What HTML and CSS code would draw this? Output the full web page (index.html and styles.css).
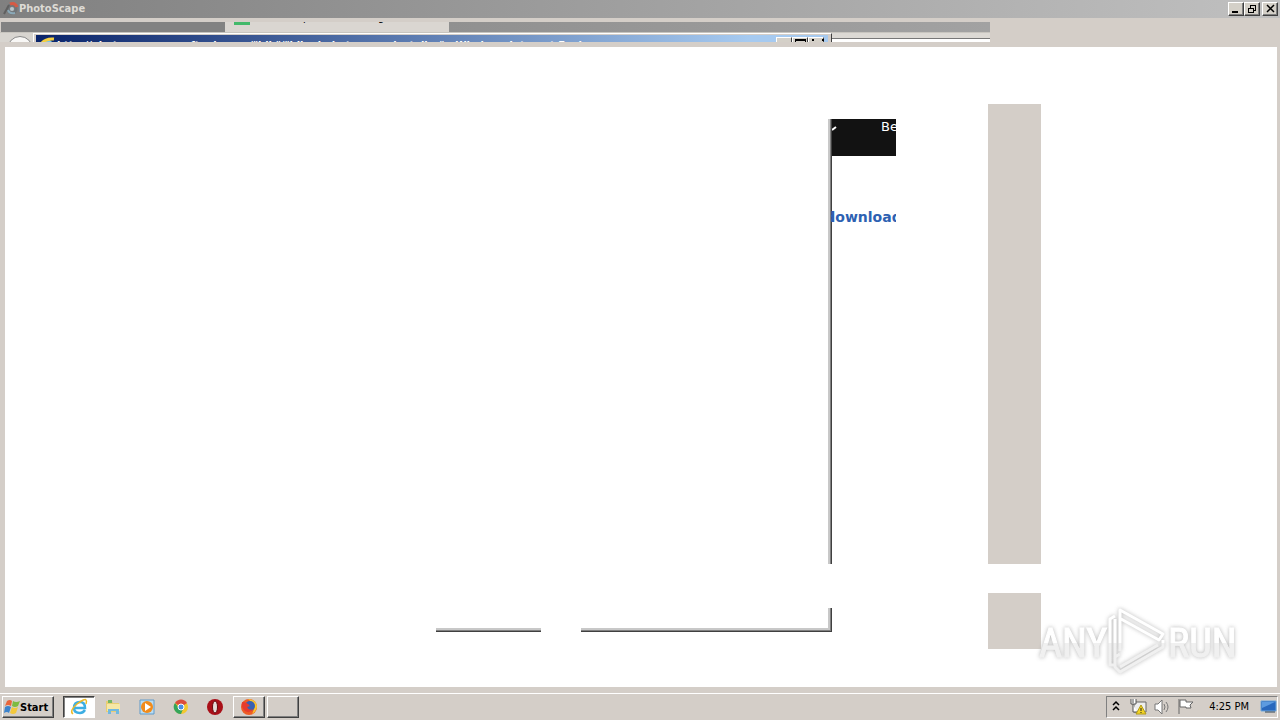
FILE: index.html
```html
<!DOCTYPE html>
<html lang="en">
<head>
<meta charset="utf-8">
<title>PhotoScape</title>
<link rel="stylesheet" href="styles.css">
</head>
<body>
<div class="desktop">
  <header class="titlebar">
    <svg class="app-icon" viewBox="0 0 16 16"><circle cx="9" cy="8" r="4" fill="none" stroke="#707579" stroke-width="3"/><path d="M7 3Q12 1 14 6" stroke="#d65a45" stroke-width="3" fill="none"/><path d="M5 9Q6 13 12 12" stroke="#8ba9b8" stroke-width="2" fill="none"/><path d="M1 13L6 4" stroke="#606060" stroke-width="2"/><circle cx="9" cy="8" r="2" fill="#b9c4c9"/></svg>
    <h1 class="title">PhotoScape</h1>
    <div class="window-buttons">
      <button class="caption" aria-label="Minimize"><svg class="caption-icon" viewBox="0 0 12 10"><path d="M2 8h6" stroke="#000" stroke-width="2"/></svg></button>
      <button class="caption" aria-label="Restore"><svg class="caption-icon" viewBox="0 0 12 10" shape-rendering="crispEdges"><path d="M4.500 3.500v-2h5v5h-2M4 1h6M2.500 4.500h5v4h-5zM2 4h6" fill="none" stroke="#000"/></svg></button>
      <button class="caption close" aria-label="Close"><svg class="caption-icon" viewBox="0 0 12 10"><path d="M3 1l7 7M10 1L3 8" stroke="#000" stroke-width="1.500"/></svg></button>
    </div>
  </header>
  <main class="workspace">
    <div class="tabs">
      <div class="tab"></div>
      <div class="tab active"><span class="tab-mark"></span><span class="tab-text">Photoscape Photo Editing</span></div>
      <div class="tab rest"></div>
    </div>
    <div class="browser-row">
      <div class="nav"><span class="back"></span></div>
      <div class="ie-frame">
        <div class="ie-title">
          <svg class="ie-small" viewBox="0 0 16 16"><circle cx="8" cy="9" r="5" fill="none" stroke="#77c4ed" stroke-width="3"/><path d="M1 9Q5 1 15 2" fill="none" stroke="#f4cf42" stroke-width="3"/></svg>
          <span class="ie-text">http://photoscape.en.softonic.com/"bib"/"bibod.photoscape.installer" - Windows Internet Explorer</span>
          <span class="minis"><span class="mini"></span><span class="mini mini-max"></span><span class="mini mini-close"></span></span>
        </div>
      </div>
      <div class="address"></div>
    </div>
    <section class="canvas">
      <div class="frame-edge"></div>
      <div class="page-header"><svg class="tick" viewBox="0 0 5 6"><path d="M0 5L4 2" stroke="#fff" stroke-width="2"/></svg><span class="page-word">Be</span></div>
      <a class="download" href="#">download</a>
      <div class="ghost"></div>
      <div class="ghost ghost-small"></div>
      <div class="frame-corner"></div>
      <div class="frame-base"></div>
      <svg class="watermark" viewBox="0 0 210 76" role="img" aria-label="ANY RUN">
        <defs><linearGradient id="fade" x1="0" y1="0" x2="0" y2="76" gradientUnits="userSpaceOnUse"><stop offset=".52" stop-color="#fff"/><stop offset=".53" stop-color="#eee"/></linearGradient></defs>
        <g fill="url(#fade)" stroke="url(#fade)"><text class="logo-word" x="12" y="54">ANY</text><text class="logo-word" x="141" y="54">RUN</text></g>
        <path d="M93 48V7l43 24-4 6-38-21M88 13l-5 3v46h5M93 64l38-22M93 51l-5 3v10l5 5 43-25v-7M88 16v38" fill="none" stroke="url(#fade)" stroke-width="3" stroke-linejoin="round"/>
      </svg>
    </section>
  </main>
  <footer class="taskbar">
    <button class="start">
      <svg class="flag" viewBox="0 0 16 16"><path d="M3 2q3-2 5 0L7 7Q4 5 1 7z" fill="#e8663c"/><path d="M9 2q3 2 7 0l-2 5q-3 2-6 0z" fill="#7dbb42"/><path d="M1 8q3-2 6 0l-2 6q-2-2-5 0z" fill="#3c83cc"/><path d="M8 8q3 2 6 0l-2 6q-3 2-6 0z" fill="#f3c83c"/></svg>Start</button>
    <nav class="tasks">
      <button class="task pressed" aria-label="Internet Explorer"><svg class="task-icon" viewBox="0 0 18 18"><path d="M5 10h10q0-6-5-6-6 0-6 6 0 5 6 5 3 0 5-3" fill="none" stroke="#3daee3" stroke-width="2.500"/><path d="M3 16Q-1 13 7 6 15 0 16 2q1 1 0 4" fill="none" stroke="#edb927" stroke-width="1.500"/></svg></button>
      <button class="task" aria-label="Explorer"><svg class="task-icon" viewBox="0 0 18 18"><path d="M2 3h6l1 2h6v9H2z" fill="#e8ce72"/><path d="M4 2h4v3H4z" fill="#75b663"/><path d="M3 6h13v7H3z" fill="#f5e7a6"/><path d="M4 16v-5h11v5h-3v-3H7v3z" fill="#72b9df"/></svg></button>
      <button class="task" aria-label="Media Player"><svg class="task-icon" viewBox="0 0 18 18"><path d="M2 2h14v14H2z" fill="#b9dcf2" stroke="#609bca"/><circle cx="9" cy="9" r="6" fill="#f18b1b"/><path d="M7 5l6 4-6 4z" fill="#fff"/></svg></button>
      <button class="task" aria-label="Chrome"><svg class="task-icon" viewBox="0 0 18 18"><circle cx="9" cy="9" r="7" fill="#f3c82f"/><path d="M9 9L3 5a7 7 0 0 1 12 0z" fill="#dc4c3d"/><path d="M3 5a7 7 0 0 0 6 11l2-5-4-1z" fill="#35a55b"/><circle cx="9" cy="9" r="3" fill="#4c8fe5" stroke="#fff"/></svg></button>
      <button class="task" aria-label="Opera"><svg class="task-icon" viewBox="0 0 18 18"><circle cx="9" cy="9" r="8" fill="#a90f18"/><ellipse cx="9" cy="9" rx="2.500" ry="6" fill="#e4dcd8" stroke="#650b10"/></svg></button>
      <button class="task raised" aria-label="Firefox"><svg class="task-icon" viewBox="0 0 18 18"><circle cx="9" cy="9" r="8" fill="#ed5b24"/><path d="M8 1q9 1 9 8-1 5-5 7 5-8-4-15z" fill="#f8c62c"/><circle cx="10" cy="8" r="5" fill="#3860b3"/><path d="M2 4q5 0 8 4l-3 1q2 4 6 2-3 5-8 2Q1 10 2 4z" fill="#e63b2d"/></svg></button>
      <button class="task raised" aria-label="PhotoScape"></button>
    </nav>
    <div class="tray">
      <svg class="tray-icon arrows" viewBox="0 0 10 16"><path d="M2 6l3-3 3 3M2 11l3-3 3 3" fill="none" stroke="#000" stroke-width="1.500"/></svg>
      <svg class="tray-icon" viewBox="0 0 18 18"><path d="M5 4h12v10H5z" fill="#eee" stroke="#666"/><path d="M2 1v5h5V1M4 1v4M4 6v8h4" fill="#fff" stroke="#555"/><path d="M12 7l5 9H7z" fill="#f3d324" stroke="#b19a18"/><path d="M12 10v3M12 14v1" stroke="#222"/></svg>
      <svg class="tray-icon" viewBox="0 0 18 18"><path d="M2 6h3l4-4v14l-4-4H2z" fill="#fff" stroke="#777"/><path d="M11 6q2 3 0 6M13 4q4 5 0 10" fill="none" stroke="#777"/></svg>
      <svg class="tray-icon" viewBox="0 0 18 18"><path d="M2 1v15M3 2h6v2h7l-3 3 1 3H9V9H3z" fill="#fff" stroke="#666"/></svg>
      <time class="clock">4:25 PM</time>
      <svg class="tray-icon" viewBox="0 0 18 18"><path d="M2 3h15v10H2z" fill="#2868bd" stroke="#6fa7db"/><path d="M3 4h13L3 10z" fill="#5c9be0"/><path d="M6 14h10" stroke="#345" stroke-width="1"/></svg>
    </div>
  </footer>
</div>
</body>
</html>
```
FILE: styles.css
```css
* { box-sizing: border-box; }
body { margin: 0; font-family: "DejaVu Sans Condensed", "DejaVu Sans", sans-serif; font-size: 11px; }
button { font: inherit; color: #000; padding: 0; border: 0; background: none; }
svg { display: block; }
.desktop { min-height: 100vh; display: flex; flex-direction: column; background: #d4cec8; }

.titlebar { height: 18px; display: flex; align-items: center; padding: 0 2px 0 3px; background: linear-gradient(90deg, #808080, #c0c0c0); }
.app-icon { width: 16px; height: 16px; }
.title { margin: 0; flex: 1; font-size: 11px; line-height: 16px; color: #dedbd5; }
.window-buttons { display: flex; }
.caption { width: 16px; height: 14px; display: grid; place-items: center; background: #d4d0c8; border: 1px solid; border-color: #fff #404040 #404040 #fff; box-shadow: inset -1px -1px #808080; }
.caption-icon { width: 12px; height: 10px; }
.close { margin-left: 2px; }

.workspace { flex: 1; display: flex; flex-direction: column; padding: 4px 3px 6px 0; }
.tabs { height: 11px; display: flex; width: 990px; padding-left: 1px; border-bottom: 1px solid #c8c5bf; }
.tab { width: 224px; background: #828282; }
.active { display: flex; align-items: flex-start; gap: 8px; overflow: hidden; background: #dad6d1; padding-left: 9px; }
.tab-mark { width: 16px; height: 3px; background: #43b96b; }
.tab-text { margin-top: -11px; line-height: 13px; white-space: nowrap; }
.rest { flex: 1; background: linear-gradient(90deg, #909090, #a2a2a2); }
.browser-row { width: 990px; height: 14px; display: flex; padding-bottom: 5px; }
.nav { width: 33px; padding: 3px 0 0 7px; overflow: hidden; background: #d8d5d0; }
.back { display: block; width: 26px; height: 26px; border: 1px solid #888; border-radius: 50%; background: #f8f7f5; }
.ie-frame { width: 799px; padding: 1px 3px 0 2px; border-top: 1px solid #fff; border-left: 1px solid #fff; border-right: 1px solid #404040; overflow: hidden; }
.ie-title { height: 16px; display: flex; gap: 2px; padding: 2px 4px 0 3px; background: linear-gradient(90deg, #0a246a, #a6caf0 90%); color: #fff; font-weight: bold; }
.ie-small { width: 16px; height: 16px; flex: none; }
.ie-text { flex: 1; line-height: 17px; white-space: nowrap; }
.minis { display: flex; }
.mini { width: 16px; height: 14px; background: #d4d0c8; border: 1px solid; border-color: #fff #404040 #404040 #fff; }
.mini-max::before { content: ""; display: block; width: 9px; height: 8px; margin: 1px 2px; border: 1px solid #000; border-top-width: 2px; }
.mini-close::before { content: ""; display: block; width: 8px; height: 2px; margin: 1px 3px; border: 2px solid #000; border-width: 0 2px; }
.address { flex: 1; border-top: 5px solid #dcd9d4; background: #fff; box-shadow: inset 0 1px #777; }

.canvas { position: relative; flex: 1; margin-left: 5px; overflow: hidden; background: #fff; }
.frame-edge { position: absolute; left: 823px; top: 72px; width: 4px; height: 445px; border-left: 2px solid #c8c8c8; border-right: 1px solid #404040; background: #808080; }
.page-header { position: absolute; left: 827px; top: 72px; width: 64px; height: 37px; display: flex; gap: 44px; overflow: hidden; background: #121212; color: #fff; font: 13px/15px "DejaVu Sans", sans-serif; }
.tick { width: 5px; height: 6px; margin-top: 6px; flex: none; }
.download { position: absolute; left: 826px; top: 160px; width: 65px; display: flex; justify-content: center; overflow: hidden; color: #2d61b2; font: bold 14px/20px "DejaVu Sans", sans-serif; text-decoration: none; }
.ghost { position: absolute; left: 983px; top: 57px; width: 53px; height: 460px; background: #d4cec8; }
.ghost-small { top: 546px; height: 56px; }
.frame-corner { position: absolute; left: 576px; top: 561px; width: 251px; height: 24px; border-right: 1px solid #404040; border-bottom: 1px solid #404040; box-shadow: inset -1px -1px #808080, inset -3px -3px #c8c8c8; clip-path: polygon(0 20px, 247px 20px, 247px 0, 100% 0, 100% 100%, 0 100%); }
.frame-base { position: absolute; left: 431px; top: 581px; width: 105px; height: 4px; border-top: 2px solid #c8c8c8; border-bottom: 1px solid #404040; background: #808080; }
.watermark { position: absolute; right: 40px; bottom: 8px; width: 210px; height: 76px; filter: drop-shadow(0 0 2px #aaa); opacity: .85; }
.logo-word { font: 40px "Liberation Sans Narrow", "Roboto Condensed", "Open Sans Condensed", sans-serif; }

.taskbar { height: 27px; display: flex; align-items: center; gap: 9px; padding: 0 2px; border-top: 1px solid #fff; background: #d4cec8; }
.start, .raised { border: 1px solid; border-color: #fff #404040 #404040 #fff; box-shadow: inset -1px -1px #808080; }
.start { width: 52px; height: 22px; display: flex; align-items: center; padding-left: 1px; font-weight: bold; }
.flag { width: 16px; height: 16px; flex: none; }
.tasks { flex: 1; display: flex; gap: 2px; }
.task { width: 32px; height: 22px; display: grid; place-items: center; }
.pressed { background: #fff; border: 1px solid; border-color: #404040 #fff #fff #404040; box-shadow: inset 1px 1px #808080; }
.task-icon { width: 18px; height: 18px; }
.tray { height: 22px; display: flex; align-items: center; gap: 6px; padding: 0 0 0 4px; border: 1px solid; border-color: #808080 #fff #fff #808080; }
.tray-icon { width: 18px; height: 18px; }
.arrows { width: 10px; height: 16px; margin-right: 2px; }
.clock { margin: 0 4px 0 8px; line-height: 16px; white-space: nowrap; }
```
